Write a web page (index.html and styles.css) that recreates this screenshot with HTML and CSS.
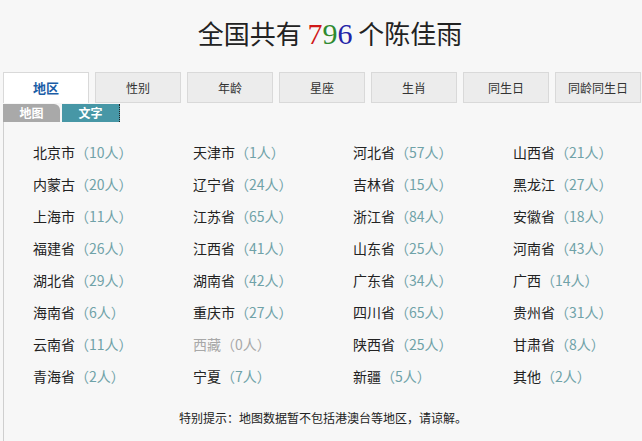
FILE: index.html
```html
<!DOCTYPE html>
<html lang="zh-CN">
<head>
    <meta charset="UTF-8">
    <title>全国共有796个陈佳雨</title>
    <link rel="stylesheet" href="styles.css">
</head>
<body>
    <h1 class="title">全国共有 <span class="num"><span class="n1">7</span><span class="n2">9</span><span class="n3">6</span></span> 个陈佳雨</h1>

    <ul class="tabs">
        <li class="tab active">地区</li>
        <li class="tab">性别</li>
        <li class="tab">年龄</li>
        <li class="tab">星座</li>
        <li class="tab">生肖</li>
        <li class="tab">同生日</li>
        <li class="tab">同龄同生日</li>
    </ul>

    <div class="panel">
        <div class="subtabs">
            <span class="sub sub-map">地图</span>
            <span class="sub sub-text">文字</span>
        </div>

        <ul class="areas">
            <li>北京市<em>（10人）</em></li>
            <li>天津市<em>（1人）</em></li>
            <li>河北省<em>（57人）</em></li>
            <li>山西省<em>（21人）</em></li>
            <li>内蒙古<em>（20人）</em></li>
            <li>辽宁省<em>（24人）</em></li>
            <li>吉林省<em>（15人）</em></li>
            <li>黑龙江<em>（27人）</em></li>
            <li>上海市<em>（11人）</em></li>
            <li>江苏省<em>（65人）</em></li>
            <li>浙江省<em>（84人）</em></li>
            <li>安徽省<em>（18人）</em></li>
            <li>福建省<em>（26人）</em></li>
            <li>江西省<em>（41人）</em></li>
            <li>山东省<em>（25人）</em></li>
            <li>河南省<em>（43人）</em></li>
            <li>湖北省<em>（29人）</em></li>
            <li>湖南省<em>（42人）</em></li>
            <li>广东省<em>（34人）</em></li>
            <li>广西<em>（14人）</em></li>
            <li>海南省<em>（6人）</em></li>
            <li>重庆市<em>（27人）</em></li>
            <li>四川省<em>（65人）</em></li>
            <li>贵州省<em>（31人）</em></li>
            <li>云南省<em>（11人）</em></li>
            <li class="empty">西藏<em>（0人）</em></li>
            <li>陕西省<em>（25人）</em></li>
            <li>甘肃省<em>（8人）</em></li>
            <li>青海省<em>（2人）</em></li>
            <li>宁夏<em>（7人）</em></li>
            <li>新疆<em>（5人）</em></li>
            <li>其他<em>（2人）</em></li>
        </ul>

        <p class="note">特别提示：地图数据暂不包括港澳台等地区，请谅解。</p>
    </div>
</body>
</html>
```

FILE: styles.css
```css
body {
    margin: 0;
    background-color: #f7f7f7;
    font-family: "Noto Sans CJK SC", "Noto Sans", sans-serif;
    color: #222;
}
.title {
    margin: 0;
    padding: 18px 0 23px 18px;
    line-height: 30px;
    font-size: 26px;
    font-weight: normal;
    text-align: center;
    color: #222;
}
.num {
    font-family: "Liberation Serif", serif;
    font-size: 30px;
}
.n1 { color: #d01818; }
.n2 { color: #2f8a2f; }
.n3 { color: #2323a8; }

.tabs {
    display: flex;
    gap: 6px;
    list-style: none;
    margin: 0;
    padding: 0 0 0 3px;
}
.tab {
    width: 86px;
    height: 31px;
    box-sizing: border-box;
    line-height: 29px;
    text-align: center;
    font-size: 12px;
    color: #333;
    background: #ececec;
    border: 1px solid #d9d9d9;
}
.tab.active {
    background: #fff;
    color: #1a5da6;
    font-weight: bold;
    font-size: 13px;
    border-bottom: none;
}

.panel {
    margin: 1px 0 0 3px;
    border-left: 1px solid #cfcfcf;
}
.subtabs {
    display: flex;
    gap: 2px;
    height: 18px;
    margin-left: -1px;
}
.sub {
    width: 57px;
    line-height: 18px;
    text-align: center;
    font-size: 12px;
    font-weight: bold;
    color: #fff;
}
.sub-map {
    background: #a9a9a9;
    border-top-right-radius: 6px;
}
.sub-text {
    background: #4797a6;
    border-right: 1px dotted #222;
}

.areas {
    display: grid;
    grid-template-columns: repeat(4, 160px);
    list-style: none;
    margin: 0;
    padding: 14px 0 0 29px;
}
.areas li {
    line-height: 32px;
    font-size: 14px;
    white-space: nowrap;
}
.areas em {
    font-style: normal;
    color: #6fa2a8;
}
.areas .empty,
.areas .empty em {
    color: #a8a8a8;
}

.note {
    margin: 0;
    padding: 17px 0 20px;
    text-align: center;
    font-size: 12px;
    color: #222;
}
```
